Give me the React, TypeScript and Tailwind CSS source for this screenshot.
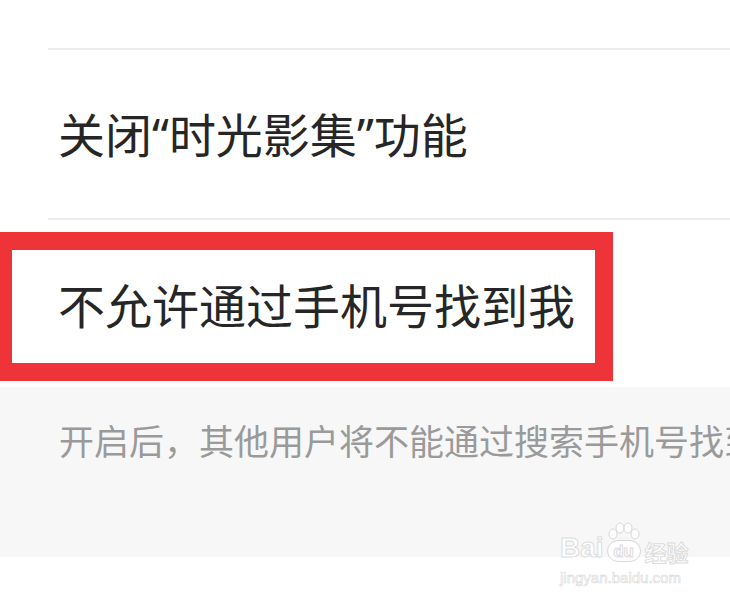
import type { ReactNode } from "react";

const cjk = "font-['Noto_Sans_CJK_SC','Noto_Sans',sans-serif]";

// curly quotes set in the Latin face so they stay narrow
function Q({ children }: { children: string }) {
  return <span className="font-['Noto_Sans',sans-serif]">{children}</span>;
}

function SettingRow({ label, height, children }: { label: ReactNode; height: string; children?: ReactNode }) {
  return (
    <div className={`relative flex items-center pl-[58px] ${height}`}>
      <span className={`${cjk} text-[47px] leading-none text-[#262626]`}>{label}</span>
      {children}
    </div>
  );
}

function Divider() {
  return <div className="ml-[48px] h-[2px] bg-[#ececec]" />;
}

// paw + wordmark stamped in the corner
function JingyanMark() {
  const outline = "text-white [-webkit-text-stroke:1px_#dcdcdc]";
  return (
    <div className="pointer-events-none absolute left-[560px] top-[522px] flex flex-col">
      <div className="flex items-end">
        <span className={`${outline} font-['Liberation_Sans',sans-serif] text-[28px] font-bold leading-none`}>
          Bai
        </span>
        <div className="relative ml-[1px] flex flex-col items-center">
          <svg width="38" height="20" viewBox="0 0 38 20" className="-mb-[2px]">
            <g fill="#fff" stroke="#d8d8d8" strokeWidth="1">
              <ellipse cx="8" cy="12" rx="4" ry="5" />
              <ellipse cx="15" cy="6" rx="4" ry="5" />
              <ellipse cx="23" cy="6" rx="4" ry="5" />
              <ellipse cx="30" cy="12" rx="4" ry="5" />
            </g>
          </svg>
          <div className="flex h-[22px] w-[34px] items-center justify-center rounded-[11px] border border-[#d8d8d8] bg-white">
            <span className={`${outline} font-['Liberation_Sans',sans-serif] text-[17px] font-bold leading-none`}>du</span>
          </div>
        </div>
        <span className={`${outline} ${cjk} ml-[2px] text-[22px] font-bold leading-none`}>经验</span>
      </div>
      <span className="mt-[8px] font-['Liberation_Sans',sans-serif] text-[15px] leading-none text-white [-webkit-text-stroke:0.6px_#d8d8d8]">
        jingyan.baidu.com
      </span>
    </div>
  );
}

export default function App() {
  return (
    <div className="relative h-[602px] w-[730px] overflow-hidden bg-white">
      <div className="h-[48px]" />
      <Divider />
      <SettingRow
        height="h-[168px]"
        label={
          <>
            关闭<Q>“</Q>时光影集<Q>”</Q>功能
          </>
        }
      />
      <Divider />
      <SettingRow height="h-[167px]" label="不允许通过手机号找到我">
        <div className="pointer-events-none absolute left-[-6px] top-[12px] h-[149px] w-[619px] border-[18px] border-[#ee3438]" />
      </SettingRow>
      <div className="h-[170px] bg-[#f7f7f7] pl-[59px] pt-[35px]">
        <p className={`${cjk} whitespace-nowrap text-[35px] leading-[35px] text-[#9a9a9a]`}>
          开启后，其他用户将不能通过搜索手机号找到你
        </p>
      </div>
      <JingyanMark />
    </div>
  );
}
